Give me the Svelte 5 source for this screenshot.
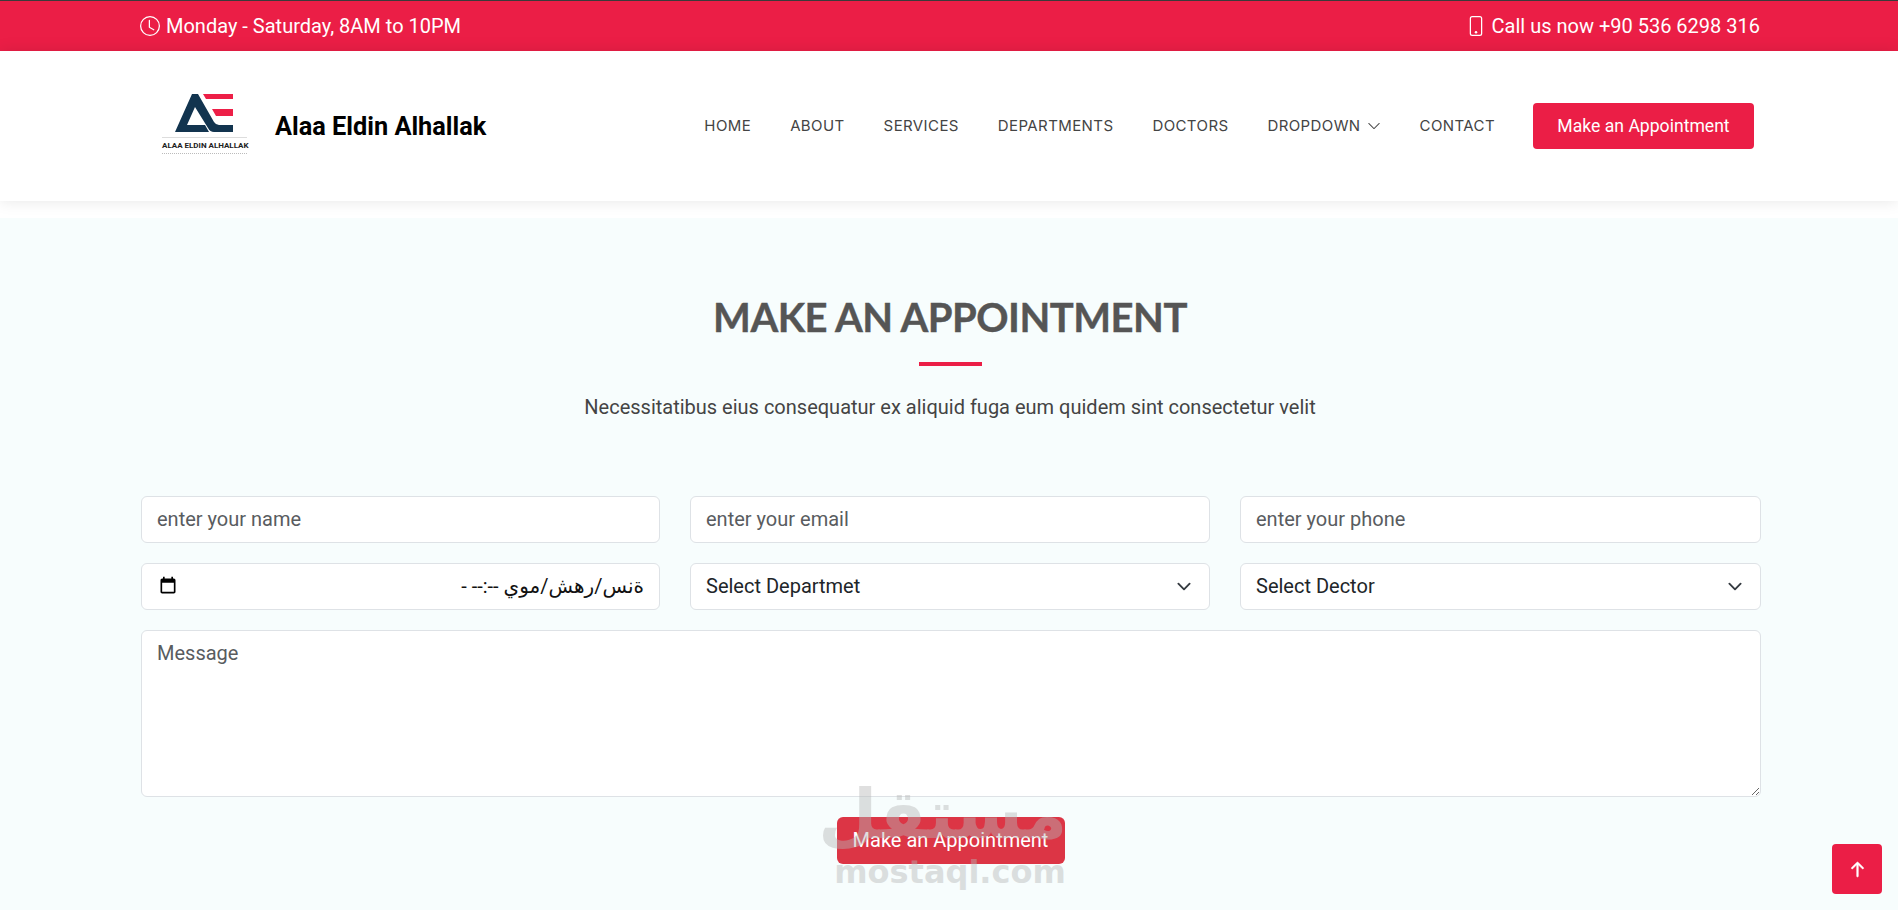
<script>
  const navItems = ['Home', 'About', 'Services', 'Departments', 'Doctors', 'Dropdown', 'Contact'];
</script>

<div class="page">
  <div class="topbar">
    <div class="topbar-item">
      <svg width="20" height="20" viewBox="0 0 16 16" fill="currentColor">
        <path d="M8 3.5a.5.5 0 0 0-1 0V9a.5.5 0 0 0 .252.434l3.5 2a.5.5 0 0 0 .496-.868L8 8.71V3.5z" />
        <path d="M8 16A8 8 0 1 0 8 0a8 8 0 0 0 0 16zm7-8A7 7 0 1 1 1 8a7 7 0 0 1 14 0z" />
      </svg>
      <span>Monday - Saturday, 8AM to 10PM</span>
    </div>
    <div class="topbar-item">
      <svg width="20" height="20" viewBox="0 0 16 16" fill="currentColor">
        <path d="M11 1a1 1 0 0 1 1 1v12a1 1 0 0 1-1 1H5a1 1 0 0 1-1-1V2a1 1 0 0 1 1-1h6zM5 0a2 2 0 0 0-2 2v12a2 2 0 0 0 2 2h6a2 2 0 0 0 2-2V2a2 2 0 0 0-2-2H5z" />
        <path d="M8 14a1 1 0 1 0 0-2 1 1 0 0 0 0 2z" />
      </svg>
      <span>Call us now +90 536 6298 316</span>
    </div>
  </div>

  <header class="header">
    <div class="brand">
      <div class="logo">
        <svg width="64" height="42" viewBox="172 92 64 42">
          <path d="M175 132 L192 94 H198 L214 122 Q216 125 219 125 H233 V132 H214 Q210 132 208 128 L195 107 L187 125 H205 L209 132 Z" fill="#12344f" />
          <path d="M203 94 H233 V99 H206 Z M212 109 H233 V116 H216 Z" fill="#ed1f47" />
        </svg>
        <div class="logo-text">ALAA ELDIN ALHALLAK</div>
      </div>
      <div class="brand-name">Alaa Eldin Alhallak</div>
    </div>

    <nav class="nav">
      {#each navItems as item}
        <a href="#top" class="nav-link">
          {item}
          {#if item === 'Dropdown'}
            <svg width="14" height="14" viewBox="0 0 16 16" fill="currentColor">
              <path fill-rule="evenodd" d="M1.646 4.646a.5.5 0 0 1 .708 0L8 10.293l5.646-5.647a.5.5 0 0 1 .708.708l-6 6a.5.5 0 0 1-.708 0l-6-6a.5.5 0 0 1 0-.708z" />
            </svg>
          {/if}
        </a>
      {/each}
      <a href="#top" class="cta">Make an Appointment</a>
    </nav>
  </header>

  <section class="appointment">
    <h2>MAKE AN APPOINTMENT</h2>
    <div class="divider"></div>
    <p class="lead">Necessitatibus eius consequatur ex aliquid fuga eum quidem sint consectetur velit</p>

    <form class="form">
      <div class="row">
        <input class="field" type="text" placeholder="enter your name" />
        <input class="field" type="email" placeholder="enter your email" />
        <input class="field" type="tel" placeholder="enter your phone" />
      </div>
      <div class="row">
        <div class="field date">
          <svg width="20" height="20" viewBox="0 0 24 24" fill="#000">
            <path d="M19 3h-1V1h-2v2H8V1H6v2H5C3.900 3 3 3.900 3 5v14c0 1.100.9 2 2 2h14c1.100 0 2-.9 2-2V5c0-1.100-.9-2-2-2zm0 16H5V8h14v11z" />
          </svg>
          <span dir="rtl">ةنس/رهش/موي --:-- -</span>
        </div>
        <select class="field select">
          <option>Select Departmet</option>
        </select>
        <select class="field select">
          <option>Select Dector</option>
        </select>
      </div>
      <textarea class="field message" placeholder="Message"></textarea>
      <button type="button" class="submit">Make an Appointment</button>
    </form>
  </section>

  <div class="watermark">
    <div class="wm-ar" dir="rtl">مستقل</div>
    <div class="wm-en">mostaql.com</div>
  </div>

  <a href="#top" class="to-top" aria-label="Back to top">
    <svg width="17" height="17" viewBox="0 0 16 16" fill="#fff" stroke="#fff" stroke-width="0.5">
      <path fill-rule="evenodd" d="M8 15a.75.75 0 0 1-.75-.75V3.56L3.53 7.28a.75.75 0 0 1-1.06-1.06l5-5a.75.75 0 0 1 1.06 0l5 5a.75.75 0 0 1-1.06 1.06L8.750 3.560V14.250A.75.75 0 0 1 8 15z" />
    </svg>
  </a>
</div>

<style>
  :global(body) {
    margin: 0;
    background: #fff;
    font-family: Roboto, "Liberation Sans", sans-serif;
    color: #444;
  }

  .page {
    height: 910px;
    overflow: hidden;
    position: relative;
    display: flex;
    flex-direction: column;
  }

  .topbar {
    height: 50px;
    border-top: 1px solid #3a3a3a;
    background: #eb1e46;
    color: #fff;
    font-size: 20px;
    padding: 0 138px 0 140px;
    display: flex;
    align-items: center;
    justify-content: space-between;
  }

  .topbar-item {
    display: flex;
    align-items: center;
    gap: 6px;
  }

  .header {
    height: 150px;
    background: #fff;
    box-shadow: 0 0 15px rgba(0, 0, 0, 0.1);
    padding: 0 144px 0 162px;
    display: flex;
    align-items: center;
    justify-content: space-between;
    position: relative;
  }

  .brand {
    display: flex;
    align-items: center;
    gap: 28px;
  }

  .logo {
    width: 85px;
    margin-bottom: 7px;
    display: flex;
    flex-direction: column;
    gap: 3px;
  }

  .logo svg {
    display: block;
    margin-left: 10px;
  }

  .logo-text {
    border-top: 1px solid #ddd;
    border-bottom: 1px dotted #bbb;
    padding: 3px 0;
    font-size: 8px;
    font-weight: 700;
    color: #222;
    white-space: nowrap;
    text-align: center;
  }

  .brand-name {
    font-size: 25.3px;
    font-weight: 700;
    color: #000;
  }

  .nav {
    display: flex;
    align-items: center;
    gap: 39px;
  }

  .nav-link {
    font-family: Inter, sans-serif;
    font-size: 15px;
    letter-spacing: 0.4px;
    color: #444;
    text-decoration: none;
    text-transform: uppercase;
    padding-bottom: 1px;
    display: flex;
    align-items: center;
    gap: 6px;
  }

  .cta {
    width: 221px;
    height: 46px;
    margin-left: -1px;
    border-radius: 4px;
    background: #eb1e46;
    color: #fff;
    font-size: 17.6px;
    text-decoration: none;
    display: flex;
    align-items: center;
    justify-content: center;
  }

  .appointment {
    flex: 1;
    margin-top: 17px;
    background: #f7fdfd;
    padding: 0 138px 0 140px;
    display: flex;
    flex-direction: column;
    align-items: center;
  }

  h2 {
    margin: 75px 0 0;
    font-family: Lato, sans-serif;
    font-size: 40px;
    line-height: 48px;
    font-weight: 700;
    letter-spacing: -0.5px;
    -webkit-text-stroke: 0.4px #555;
    color: #555;
  }

  .divider {
    width: 63px;
    height: 4px;
    background: #eb1e46;
    margin-top: 21px;
  }

  .lead {
    margin: 26px 0 0;
    font-size: 20px;
    line-height: 30px;
    color: #444;
  }

  .form {
    align-self: flex-start;
    width: 1620px;
    margin: 74px 0 0 1px;
    display: flex;
    flex-direction: column;
    align-items: center;
    gap: 20px;
  }

  .row {
    width: 100%;
    display: grid;
    grid-template-columns: 519px 520px 521px;
    gap: 30px;
  }

  .field {
    box-sizing: border-box;
    width: 100%;
    height: 47px;
    border: 1px solid #dee2e6;
    border-radius: 6px;
    background: #fff;
    padding: 0 15px 2px;
    font-family: inherit;
    font-size: 20px;
    color: #212529;
    outline: none;
  }

  .field::placeholder {
    color: #595c5f;
  }

  .date {
    display: flex;
    align-items: center;
    justify-content: space-between;
    font-family: Roboto, "DejaVu Sans", sans-serif;
    color: #111;
  }

  .date svg {
    margin-left: 1px;
  }

  .select {
    appearance: none;
    background-image: url("data:image/svg+xml,%3csvg xmlns='http://www.w3.org/2000/svg' viewBox='0 0 16 16'%3e%3cpath fill='none' stroke='%23343a40' stroke-linecap='round' stroke-linejoin='round' stroke-width='2' d='m2 5 6 6 6-6'/%3e%3c/svg%3e");
    background-repeat: no-repeat;
    background-position: right 15px center;
    background-size: 20px 15px;
  }

  .message {
    height: 167px;
    padding-top: 7px;
    resize: vertical;
    display: block;
    line-height: 30px;
  }

  .submit {
    width: 228px;
    height: 47px;
    margin-right: 1px;
    padding-bottom: 3px;
    border: none;
    border-radius: 6px;
    background: #dc3545;
    color: #fff;
    font-family: inherit;
    font-size: 20px;
  }

  .watermark {
    position: absolute;
    left: 833px;
    top: 776px;
    width: 234px;
    text-align: center;
    color: #b7b7b7;
    opacity: 0.44;
    pointer-events: none;
    font-family: "DejaVu Sans", sans-serif;
    font-weight: 700;
  }

  .wm-ar {
    font-size: 68px;
    line-height: 78px;
  }

  .wm-en {
    font-size: 32px;
    line-height: 36px;
  }

  .to-top {
    position: absolute;
    right: 16px;
    bottom: 16px;
    width: 50px;
    height: 50px;
    border-radius: 4px;
    background: #eb1e46;
    display: flex;
    align-items: center;
    justify-content: center;
  }
</style>
